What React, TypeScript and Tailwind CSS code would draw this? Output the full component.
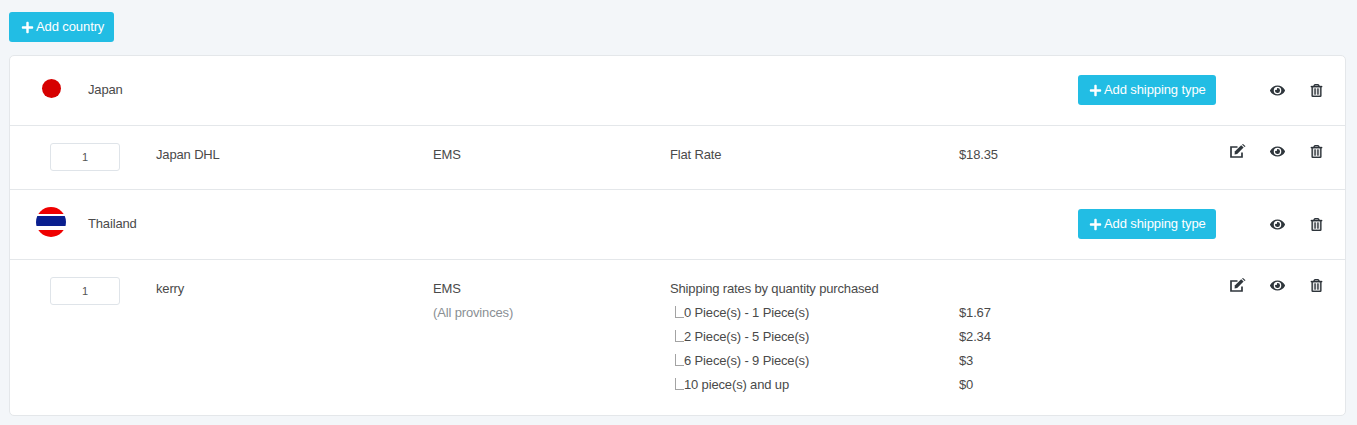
import { FaEye, FaPlus, FaRegTrashAlt } from 'react-icons/fa';

type Tier = { label: string; price: string };

const kerryTiers: Tier[] = [
  { label: '0 Piece(s) - 1 Piece(s)', price: '$1.67' },
  { label: '2 Piece(s) - 5 Piece(s)', price: '$2.34' },
  { label: '6 Piece(s) - 9 Piece(s)', price: '$3' },
  { label: '10 piece(s) and up', price: '$0' },
];

function IconSlot({ children }: { children: React.ReactNode }) {
  return <span className="flex h-4 w-[39px] items-center justify-center text-[#2f363c]">{children}</span>;
}

function EditIcon() {
  return (
    <svg width="16" height="14" viewBox="0 0 16 14" className="-translate-x-px">
      <path d="M12 8.5V13H1V3h6.5" fill="none" stroke="currentColor" strokeWidth="1.7" />
      <path d="M4.8 7.6 11.2 1.2 13.6 3.6 7.2 10 4.6 10.4Z" fill="currentColor" />
      <path d="M12 .6 13 0 15.5 2.3 14.6 3.1Z" fill="currentColor" />
    </svg>
  );
}

function TrashIcon() {
  return <FaRegTrashAlt className="text-[13px]" stroke="currentColor" strokeWidth={14} />;
}

function AddButton({ label, className }: { label: string; className: string }) {
  return (
    <button className={`flex h-[30px] items-center gap-[2px] rounded-[3px] bg-[#22bde4] text-[13px] tracking-[-0.1px] text-white ${className}`}>
      <FaPlus className="text-[13px]" />
      {label}
    </button>
  );
}

function JapanFlag() {
  return (
    <div className="flex h-[30px] w-[30px] items-center justify-center rounded-full bg-white">
      <div className="h-[19px] w-[19px] rounded-full bg-[#d60000]" />
    </div>
  );
}

function ThaiFlag() {
  return (
    <div className="flex h-[30px] w-[30px] flex-col overflow-hidden rounded-full">
      <div className="h-[7px] bg-[#ef0000]" />
      <div className="h-[2px] bg-white" />
      <div className="h-[10px] bg-[#0a1f8f]" />
      <div className="h-[4px] bg-white" />
      <div className="h-[7px] bg-[#ef0000]" />
    </div>
  );
}

function CountryRow({ name, flag, textTop }: { name: string; flag: React.ReactNode; textTop: string }) {
  return (
    <div className="flex h-[70px] items-start border-b border-[#e4e7ea] pt-[17px]">
      <div className="ml-[26px] w-[30px]">{flag}</div>
      <div className={`ml-[22px] leading-6 ${textTop}`}>{name}</div>
      <div className="ml-auto mt-[2px] flex items-center">
        <AddButton label="Add shipping type" className="w-[138px] pl-[11px]" />
        <div className="ml-[42px] flex pr-[9px]">
          <IconSlot>
            <FaEye className="text-[15px]" />
          </IconSlot>
          <IconSlot>
            <TrashIcon />
          </IconSlot>
        </div>
      </div>
    </div>
  );
}

function ShippingRow({
  name,
  carrier,
  note,
  rate,
  price,
  tiers,
  last,
}: {
  name: string;
  carrier: string;
  note?: string;
  rate: string;
  price?: string;
  tiers?: Tier[];
  last?: boolean;
}) {
  return (
    <div className={`flex items-start pb-[18px] pt-[17px] ${last ? '' : 'border-b border-[#e4e7ea]'}`}>
      <input
        readOnly
        value="1"
        className="ml-10 h-7 w-[70px] rounded-[3px] border border-[#dfe4e9] bg-white text-center text-[11px] text-[#555]"
      />
      <div className="ml-9 w-[277px] leading-6">{name}</div>
      <div className="w-[237px] leading-6">
        <div>{carrier}</div>
        {note && <div className="text-[#8a8f94]">{note}</div>}
      </div>
      <div className="w-[549px] leading-6">
        <div className="flex">
          <div className="w-[289px]">{rate}</div>
          {price && <div>{price}</div>}
        </div>
        {tiers?.map((tier) => (
          <div key={tier.label} className="flex">
            <div className="flex w-[289px] items-start pl-[5px]">
              <span className="mt-[5px] h-3 w-[9px] border-b border-l border-[#a3a3a3]" />
              {tier.label}
            </div>
            <div>{tier.price}</div>
          </div>
        ))}
      </div>
      <div className="flex">
        <IconSlot>
          <EditIcon />
        </IconSlot>
        <IconSlot>
          <FaEye className="text-[15px]" />
        </IconSlot>
        <IconSlot>
          <TrashIcon />
        </IconSlot>
      </div>
    </div>
  );
}

export default function App() {
  return (
    <div className="min-h-[425px] bg-[#f3f6f9] px-[9px] pt-3 font-['Liberation_Sans',Arial,sans-serif] text-[13px] tracking-[-0.15px] text-[#4a4a4a]">
      <AddButton label="Add country" className="w-[105px] pl-3" />
      <div className="mt-[13px] w-[1337px] overflow-hidden rounded-[5px] border border-[#e4e7ea] bg-white">
        <CountryRow name="Japan" flag={<JapanFlag />} textTop="mt-[5px]" />
        <ShippingRow name="Japan DHL" carrier="EMS" rate="Flat Rate" price="$18.35" />
        <CountryRow name="Thailand" flag={<ThaiFlag />} textTop="mt-[5px]" />
        <ShippingRow
          name="kerry"
          carrier="EMS"
          note="(All provinces)"
          rate="Shipping rates by quantity purchased"
          tiers={kerryTiers}
          last
        />
      </div>
    </div>
  );
}
